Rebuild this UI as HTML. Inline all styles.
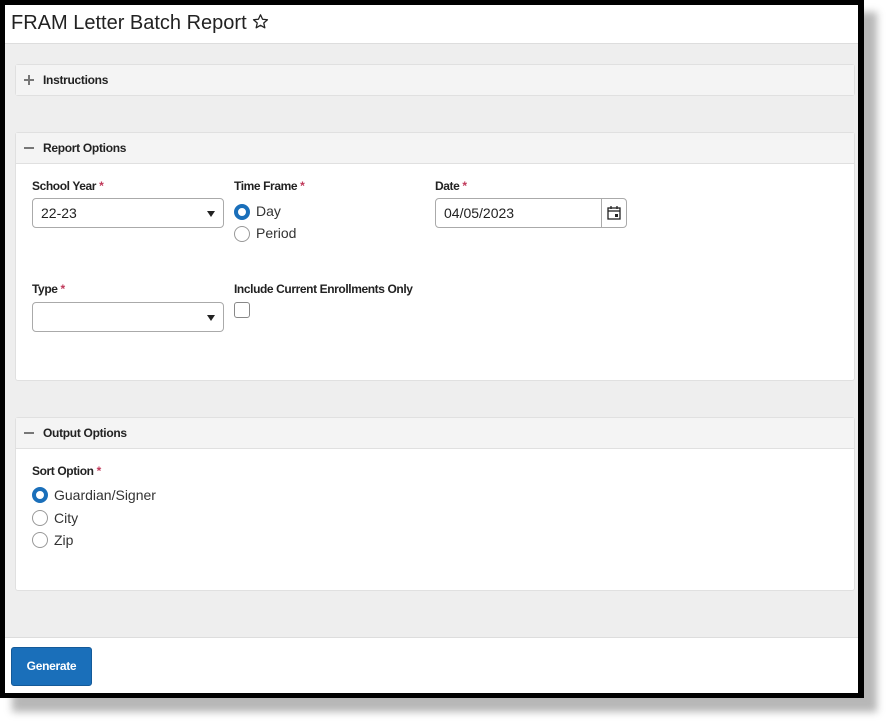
<!DOCTYPE html>
<html><head><style>
*{box-sizing:border-box;margin:0;padding:0}
body{width:888px;height:723px;background:#fff;position:relative;overflow:hidden;font-family:"Liberation Sans",Arial,sans-serif;color:#222}
.shadow{position:absolute;left:12px;top:12px;width:865px;height:700px;background:#999;filter:blur(4px);opacity:.7}
.frame{position:absolute;left:0;top:0;width:864px;height:698px;background:#000}
.inner{position:absolute;left:5px;top:5px;width:853px;height:688px;background:#eee;overflow:hidden}
.hdr{position:absolute;left:0;top:0;width:853px;height:39px;background:#fff;border-bottom:1px solid #ddd}
.hdr h1{position:absolute;left:6px;top:7px;font-size:20px;font-weight:normal;color:#222}
.panel{position:absolute;left:10px;width:840px;background:#fff;border:1px solid #e0e0e0;border-radius:3px}
.ph{height:31px;background:#f4f4f4;border-bottom:1px solid #e0e0e0;font-size:12px;font-weight:bold;line-height:30px;padding-left:27px;position:relative;color:#222;letter-spacing:-0.3px}
.ph .ic{position:absolute;left:8px;top:14px;width:10px;height:2px;background:#777}
.ph .v{position:absolute;left:12px;top:10px;width:2px;height:10px;background:#777}
.a{position:absolute}
.lbl{font-size:12px;font-weight:bold;color:#222;letter-spacing:-0.4px}
.req{color:#c0395a;margin-left:3px}
.sel{position:absolute;width:192px;height:30px;border:1px solid #aaa;border-radius:4px;background:#fff;font-size:14px;padding:6px 8px}
.sel:after{content:"";position:absolute;right:8px;top:12px;border-left:4px solid transparent;border-right:4px solid transparent;border-top:6px solid #222}
.rad{position:absolute;width:16px;height:16px;border:1px solid #999;border-radius:50%;background:#fff}
.rad.on{border:4px solid #1a6fba}
.rt{position:absolute;font-size:14px;color:#333}
.foot{position:absolute;left:0;top:632px;width:853px;height:60px;background:#fff;border-top:1px solid #ddd}
.btn{position:absolute;left:6px;top:9px;width:81px;height:39px;background:#1a6fba;border-radius:3px;border:1px solid #145a99;color:#fff;font-size:12px;font-weight:bold;text-align:center;line-height:37px;letter-spacing:-0.3px}
</style></head><body>
<div class="shadow"></div>
<div class="frame"></div>
<div class="inner">
 <div class="hdr"><h1>FRAM Letter Batch Report <svg width="17" height="17" viewBox="0 0 24 24" style="vertical-align:-1px"><path d="M12 2.5l2.9 6.3 6.9.7-5.2 4.6 1.5 6.8L12 17.4l-6.1 3.5 1.5-6.8L2.2 9.5l6.9-.7z" fill="none" stroke="#222" stroke-width="1.8" stroke-linejoin="round"/></svg></h1></div>
 <div class="panel" style="top:59px;height:32px"><div class="ph" style="border-bottom:none;height:30px"><span class="ic"></span><span class="v"></span>Instructions</div></div>
 <div class="panel" style="top:127px;height:249px">
  <div class="ph"><span class="ic"></span>Report Options</div>
 </div>
 <div class="panel" style="top:412px;height:174px">
  <div class="ph"><span class="ic"></span>Output Options</div>
 </div>
 <div class="a lbl" style="left:27px;top:174px">School Year<span class="req">*</span></div>
 <div class="sel" style="left:27px;top:193px">22-23</div>
 <div class="a lbl" style="left:229px;top:174px">Time Frame<span class="req">*</span></div>
 <div class="rad on" style="left:229px;top:199px"></div><div class="rt" style="left:251px;top:198px">Day</div>
 <div class="rad" style="left:229px;top:221px"></div><div class="rt" style="left:251px;top:220px">Period</div>
 <div class="a lbl" style="left:430px;top:174px">Date<span class="req">*</span></div>
 <div class="a" style="left:430px;top:193px;width:192px;height:30px;border:1px solid #aaa;border-radius:4px;background:#fff;font-size:14px;padding:6px 8px">04/05/2023
  <div style="position:absolute;right:0;top:0;width:25px;height:28px;border-left:1px solid #aaa">
   <svg width="14" height="14" viewBox="0 0 14 14" style="position:absolute;left:5px;top:7px"><rect x="1" y="2" width="12" height="11" fill="none" stroke="#222" stroke-width="1.3"/><line x1="1" y1="5" x2="13" y2="5" stroke="#222" stroke-width="1.3"/><line x1="4" y1="0" x2="4" y2="3" stroke="#222" stroke-width="1.3"/><line x1="10" y1="0" x2="10" y2="3" stroke="#222" stroke-width="1.3"/><rect x="8" y="8" width="3" height="3" fill="#222"/></svg>
  </div></div>
 <div class="a lbl" style="left:27px;top:277px">Type<span class="req">*</span></div>
 <div class="sel" style="left:27px;top:297px"></div>
 <div class="a lbl" style="left:229px;top:277px">Include Current Enrollments Only</div>
 <div class="a" style="left:229px;top:297px;width:16px;height:16px;border:1px solid #888;border-radius:3px;background:#fff"></div>
 <div class="a lbl" style="left:27px;top:459px">Sort Option<span class="req">*</span></div>
 <div class="rad on" style="left:27px;top:482px"></div><div class="rt" style="left:49px;top:482px">Guardian/Signer</div>
 <div class="rad" style="left:27px;top:505px"></div><div class="rt" style="left:49px;top:505px">City</div>
 <div class="rad" style="left:27px;top:527px"></div><div class="rt" style="left:49px;top:527px">Zip</div>
 <div class="foot"><div class="btn">Generate</div></div>
</div>
</body></html>
